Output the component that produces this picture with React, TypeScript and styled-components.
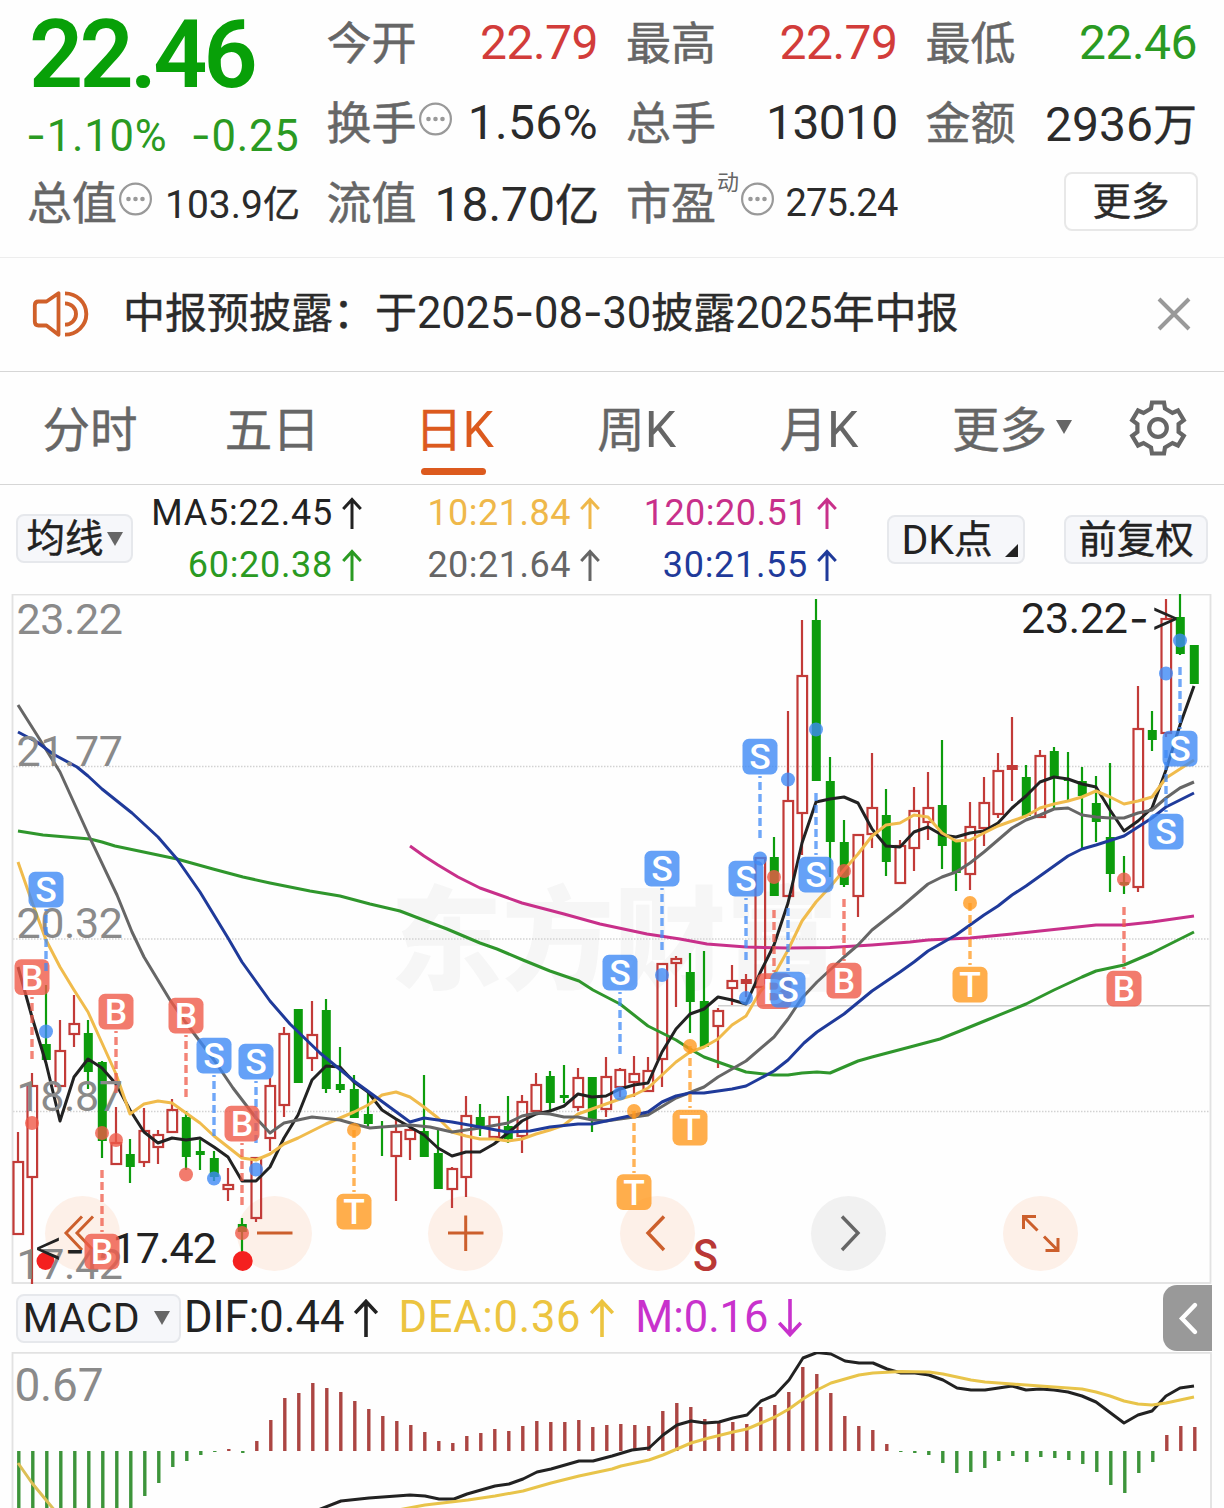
import React from "react";
import styled, { createGlobalStyle } from "styled-components";

const SANS = `Roboto, "Noto Sans CJK SC", sans-serif`;
const CJK = `"Noto Sans CJK SC", sans-serif`;

const C = {
  up: "#d23c3a",
  down: "#2a9a22",
  label: "#666666",
  text: "#2b2b2b",
  accent: "#dc5a1e",
  frame: "#e2e2e2",
};

const GlobalStyle = createGlobalStyle`
  * { box-sizing: border-box; }
  body { margin: 0; background: #fff; }
`;

const Page = styled.main`
  width: 1224px;
  height: 1508px;
  overflow: hidden;
  display: flex;
  flex-direction: column;
  background: #fefefe;
  font-family: ${SANS};
  color: ${C.text};
`;

/* ---------- quote header ---------- */

const Quote = styled.section`
  height: 258px;
  padding: 3px 27px 0;
  display: grid;
  grid-template-columns: repeat(4, 1fr);
  grid-template-rows: repeat(3, 80px);
  column-gap: 28px;
  border-bottom: 1px solid #ededed;
`;

const PriceBlock = styled.div`
  grid-row: span 2;
  display: flex;
  flex-direction: column;
`;

const Price = styled.div`
  height: 104px;
  line-height: 104px;
  padding-left: 2px;
  font-size: 95px;
  font-weight: 600;
  letter-spacing: -3.8px;
  color: #08a008;
`;

const Changes = styled.div`
  display: flex;
  justify-content: space-between;
  margin: 0 -1px 0 -1px;
  line-height: 56px;
  font-size: 43.5px;
  letter-spacing: 0.8px;
  color: ${C.down};
`;

const Cell = styled.div`
  display: flex;
  align-items: center;
  justify-content: space-between;
  white-space: nowrap;
`;

const Label = styled.span`
  display: flex;
  align-items: center;
  padding-bottom: 4px;
  font: 45px/76px ${CJK};
  color: ${C.label};
  -webkit-text-stroke: 0.5px currentColor;
`;

const Value = styled.span<{ $tone?: string; $size?: number; $track?: number; $shift?: number }>`
  margin-right: ${(p) => -(p.$shift ?? 0)}px;
  font-size: ${(p) => p.$size ?? 48}px;
  line-height: 80px;
  letter-spacing: ${(p) => p.$track ?? 0}px;
  color: ${(p) => p.$tone ?? C.text};
`;

const Unit = styled.span<{ $size: number }>`
  font-family: ${CJK};
  font-size: ${(p) => p.$size}px;
  -webkit-text-stroke: 0.4px currentColor;
`;

const Sup = styled.sup`
  align-self: flex-start;
  margin-left: 1px;
  font-size: 22px;
  line-height: 34px;
  -webkit-text-stroke: 0;
`;

const Dash = styled.span`
  font-family: Inter, sans-serif;
`;

const MoreButton = styled.button`
  justify-self: end;
  align-self: center;
  width: 134px;
  height: 59px;
  margin: -3px -1px 0 0;
  padding: 0 0 6px;
  border: 2px solid #e8e8e8;
  border-radius: 8px;
  background: #fff;
  font: 38.5px/49px ${CJK};
  -webkit-text-stroke: 0.4px currentColor;
  color: ${C.text};
`;

/* ---------- notice ---------- */

const Notice = styled.section`
  height: 114px;
  padding: 0 33px 1px 32px;
  display: flex;
  align-items: center;
  border-bottom: 1px solid #d6d6d6;
`;

const NoticeText = styled.p`
  flex: 1;
  margin: 0 0 4px 33px;
  font: 42px/60px ${CJK};
  -webkit-text-stroke: 0.4px currentColor;
  white-space: nowrap;
`;

const Num = styled.span`
  font-family: Roboto, sans-serif;
  font-size: 43.5px;
  letter-spacing: -0.15px;
  -webkit-text-stroke: 0;
`;

/* ---------- period tabs ---------- */

const Tabs = styled.nav`
  height: 113px;
  display: flex;
  border-bottom: 1px solid #d6d6d6;
`;

const Tab = styled.div<{ $active?: boolean }>`
  width: 182.2px;
  display: flex;
  flex-direction: column;
  align-items: center;
  padding-top: 20px;
  font: 47.5px/70px ${CJK};
  -webkit-text-stroke: 0.4px currentColor;
  color: ${(p) => (p.$active ? C.accent : C.label)};
  white-space: nowrap;
  &:first-child { margin-left: -1px; }
  &::after {
    content: "";
    width: 65px;
    height: 7px;
    margin: 3px 1px 0 0;
    border-radius: 4px;
    background: ${(p) => (p.$active ? C.accent : "transparent")};
  }
`;

const TabLabel = styled.span<{ $wide?: boolean }>`
  display: flex;
  align-items: center;
  gap: 9px;
  margin-left: ${(p) => (p.$wide ? 22 : 0)}px;
`;

const K = styled.span`
  font: 50px/70px Roboto, sans-serif;
  -webkit-text-stroke: 0;
`;

const Inline = styled.span`
  white-space: nowrap;
`;

const Settings = styled.div`
  flex: 1;
  display: flex;
  align-items: center;
  justify-content: center;
`;

const Caret = styled.i<{ $w: number; $h: number; $ml?: number }>`
  margin-left: ${(p) => p.$ml ?? 0}px;
  border: ${(p) => p.$w / 2}px solid transparent;
  border-bottom: 0;
  border-top: ${(p) => p.$h}px solid ${C.label};
`;

/* ---------- moving averages ---------- */

const Averages = styled.section`
  height: 109px;
  padding: 0 16px;
  display: flex;
  align-items: flex-start;
`;

const Chip = styled.button<{ $w: number; $ml?: number; $mt?: number }>`
  width: ${(p) => p.$w}px;
  height: 49px;
  margin: ${(p) => p.$mt ?? 0}px 0 0 ${(p) => p.$ml ?? 0}px;
  padding: 0;
  display: flex;
  align-items: center;
  justify-content: center;
  border: 2px solid #e6e8ec;
  border-radius: 8px;
  background: #f6f7fa;
  font: 38.5px/45px ${CJK};
  color: #222;
  white-space: nowrap;
`;

const Han = styled.span`
  margin-top: -6px;
  -webkit-text-stroke: 0.4px currentColor;
`;

const Latin = styled.span<{ $size: number; $track?: number; $ml?: number }>`
  margin-left: ${(p) => p.$ml ?? 0}px;
  font: ${(p) => p.$size}px/46px Roboto, sans-serif;
  letter-spacing: ${(p) => p.$track ?? 0}px;
`;

const Corner = styled.i`
  align-self: flex-end;
  margin: 0 -2px 5px 12px;
  border-left: 13px solid transparent;
  border-bottom: 13px solid #222;
`;

const AverageGrid = styled.div`
  width: 704px;
  display: grid;
  grid-template-columns: 229px 238px 237px;
  grid-auto-rows: 52px;
  padding-top: 2px;
`;

const Reading = styled.div<{ $tone: string; $size?: number; $track?: number }>`
  display: flex;
  align-items: center;
  justify-content: flex-end;
  gap: 9px;
  font-size: ${(p) => p.$size ?? 36}px;
  letter-spacing: ${(p) => p.$track ?? 0.5}px;
  line-height: 52px;
  white-space: nowrap;
  color: ${(p) => p.$tone};
`;

const ArrowSvg = styled.svg`
  display: block;
  flex: none;
`;

/* ---------- charts ---------- */

const ChartArea = styled.section`
  position: relative;
  height: 690px;
`;

const Plot = styled.svg`
  position: absolute;
  left: 0;
  top: 0;
  display: block;
`;

const Controls = styled.div`
  position: absolute;
  left: 45px;
  right: 146px;
  bottom: 13px;
  display: flex;
  justify-content: space-between;
`;

const Round = styled.button<{ $muted?: boolean }>`
  width: 75px;
  height: 75px;
  padding: 0;
  border: 0;
  border-radius: 50%;
  background: ${(p) => (p.$muted ? "#f1f1f1" : "#fdf0e8")};
  color: ${(p) => (p.$muted ? "#666" : "#cc5f2c")};
  svg { display: block; }
`;

const MacdBar = styled.section`
  height: 68px;
  padding: 0 12px 0 16px;
  display: flex;
  align-items: center;
`;

const MacdReadings = styled.div`
  flex: 1;
  display: flex;
  gap: 21px;
  margin-left: 3px;
`;

const Drawer = styled.button`
  width: 49px;
  height: 66px;
  padding: 0;
  border: 0;
  border-radius: 14px 0 0 14px;
  background: #999;
`;

const MacdPlot = styled.svg`
  display: block;
`;

/* ---------- data ---------- */

const xAt = (i: number) => 18.3 + i * 14;

type Candle = [kind: "r" | "g" | "f", high: number, top: number, bottom: number, low: number];

const candles: Candle[] = [
  ["r", 1132, 1162, 1234, 1234], ["r", 1073, 1086, 1177, 1284], ["g", 985, 1044, 1060, 1060],
  ["r", 1020, 1051, 1086, 1086], ["r", 995, 1024, 1034, 1047], ["g", 1020, 1033, 1072, 1089],
  ["g", 1061, 1062, 1141, 1158], ["r", 1107, 1143, 1164, 1164], ["g", 1139, 1154, 1167, 1183],
  ["r", 1108, 1131, 1162, 1167], ["r", 1130, 1135, 1147, 1164], ["r", 1099, 1110, 1132, 1132],
  ["g", 1111, 1117, 1157, 1170], ["g", 1140, 1151, 1155, 1170], ["g", 1151, 1158, 1177, 1181],
  ["r", 1168, 1185, 1189, 1201], ["g", 1218, 1224, 1232, 1252], ["r", 1157, 1158, 1218, 1222],
  ["r", 1078, 1086, 1138, 1151], ["r", 1027, 1034, 1105, 1117], ["g", 1009, 1009, 1083, 1083],
  ["r", 1001, 1035, 1058, 1071], ["g", 999, 1010, 1089, 1093], ["g", 1047, 1084, 1090, 1093],
  ["g", 1075, 1089, 1118, 1118], ["g", 1093, 1114, 1124, 1126], ["g", 1121, 1126, 1127, 1156],
  ["r", 1118, 1132, 1156, 1201], ["r", 1127, 1130, 1139, 1160], ["g", 1075, 1131, 1157, 1157],
  ["g", 1130, 1153, 1189, 1189], ["r", 1167, 1169, 1189, 1208], ["r", 1096, 1116, 1177, 1197],
  ["g", 1104, 1117, 1127, 1136], ["r", 1117, 1117, 1137, 1140], ["g", 1096, 1126, 1139, 1143],
  ["r", 1095, 1102, 1136, 1153], ["r", 1073, 1085, 1111, 1111], ["g", 1071, 1076, 1103, 1110],
  ["g", 1065, 1095, 1098, 1103], ["r", 1068, 1078, 1107, 1111], ["g", 1077, 1077, 1120, 1132],
  ["r", 1057, 1077, 1109, 1117], ["r", 1068, 1070, 1087, 1097], ["r", 1056, 1074, 1082, 1097],
  ["r", 1057, 1071, 1091, 1091], ["r", 964, 964, 1059, 1087], ["r", 956, 959, 963, 1007],
  ["g", 953, 972, 1002, 1033], ["g", 951, 1001, 1047, 1047], ["r", 1008, 1011, 1026, 1068],
  ["r", 965, 981, 988, 1005], ["f", 974, 979, 984, 997], ["r", 858, 858, 987, 987],
  ["g", 837, 857, 896, 896], ["r", 711, 801, 896, 896], ["r", 620, 676, 813, 855],
  ["g", 599, 620, 781, 781], ["g", 757, 781, 842, 877], ["g", 820, 842, 885, 887],
  ["r", 835, 835, 896, 917], ["r", 753, 808, 834, 848], ["g", 789, 815, 862, 876],
  ["r", 840, 846, 883, 883], ["r", 787, 811, 848, 871], ["r", 772, 808, 822, 840],
  ["g", 740, 805, 846, 869], ["g", 840, 840, 873, 891], ["r", 802, 827, 874, 890],
  ["r", 777, 803, 828, 846], ["r", 753, 771, 814, 818], ["f", 717, 765, 770, 801],
  ["g", 765, 777, 816, 816], ["r", 750, 756, 817, 817], ["g", 747, 751, 777, 808],
  ["g", 752, 779, 780, 801], ["g", 767, 781, 796, 848], ["g", 776, 803, 822, 842],
  ["g", 763, 837, 874, 892], ["g", 856, 882, 885, 894], ["r", 686, 729, 887, 892],
  ["g", 711, 730, 740, 751], ["r", 599, 619, 733, 737], ["g", 594, 617, 654, 655],
  ["g", 645, 645, 684, 684],
];

const ma5 = [
  967, 1017, 1063, 1121, 1077, 1059, 1068, 1084, 1110, 1132, 1143, 1138, 1140, 1138, 1147, 1157,
  1181, 1181, 1167, 1138, 1115, 1080, 1066, 1067, 1082, 1092, 1110, 1119, 1127, 1135, 1148, 1156,
  1152, 1152, 1144, 1133, 1121, 1114, 1111, 1106, 1094, 1097, 1096, 1089, 1085, 1083, 1052, 1029,
  1014, 1009, 997, 1000, 1004, 973, 945, 903, 843, 802, 799, 797, 803, 829, 846, 847, 832, 827,
  835, 837, 833, 831, 823, 808, 796, 782, 777, 779, 784, 787, 810, 831, 821, 808, 770, 725, 686,
];

const ma10 = [
  862, 902, 940, 967, 990, 1012, 1043, 1074, 1114, 1104, 1101, 1103, 1113, 1123, 1136, 1147, 1158,
  1160, 1154, 1144, 1138, 1131, 1124, 1118, 1112, 1105, 1095, 1092, 1097, 1107, 1118, 1132, 1136,
  1139, 1139, 1141, 1139, 1134, 1130, 1125, 1114, 1109, 1104, 1099, 1095, 1088, 1075, 1062, 1052,
  1047, 1039, 1025, 1016, 992, 975, 950, 921, 902, 887, 870, 854, 836, 825, 823, 815, 817, 833,
  841, 840, 833, 826, 821, 816, 808, 804, 801, 797, 791, 797, 804, 801, 797, 778, 769, 760,
];

const toLine = (ys: number[]) => ys.map((y, i) => `${18 + i * 14},${y}`).join(" ");

const lines = [
  {
    color: "#2f962c",
    points:
      "18,831 43,835 90,839 102,842 115,846 177,859 213,869 243,877 270,883 310,891 340,896 370,904 400,911 447,929 480,943 497,949 523,960 550,971 579,981 593,990 620,1004 648,1026 676,1040 690,1049 704,1057 718,1062 746,1072 774,1075 788,1075 802,1073 817,1072 830,1073 858,1061 872,1057 910,1047 940,1039 960,1031 987,1020 1026,1004 1054,990 1082,977 1096,971 1124,965 1152,953 1166,946 1194,932",
  },
  {
    color: "#c8308a",
    points:
      "410,846 424,856 438,865 458,877 480,888 522,903 564,914 600,924 647,934 680,939 707,944 746,947 788,948 830,947.5 872,945 910,942 928,940 970,938 1012,934 1026,932.5 1068,928 1096,925 1124,925 1152,922 1194,916",
  },
  { color: "#222222", points: toLine(ma5) },
  { color: "#f0bb4c", points: toLine(ma10) },
  {
    color: "#666666",
    points:
      "18,705 37,735 60,772 90,838 117,895 132,932 144,957 170,1000 186,1023 214,1060 233,1088 256,1118 270,1133 284,1123 298,1120 312,1117 340,1120 354,1124 370,1128 382,1127 410,1125 430,1127 452,1132 480,1128 508,1123 522,1116 536,1113 550,1114 564,1117 578,1117 592,1120 606,1121 620,1119 648,1115 676,1098 704,1087 718,1077 746,1061 774,1037 788,1019 802,998 817,982 844,957 858,945 872,930 900,908 928,884 942,877 956,872 970,863 984,852 1012,828 1026,820 1040,815 1054,809 1068,808 1082,815 1096,817 1110,818 1124,818 1138,813 1152,810 1166,798 1180,788 1194,782",
  },
  {
    color: "#1f3a9a",
    points:
      "18,732 37,742 53,754 77,767 88,776 102,789 132,813 158,837 177,859 200,892 228,938 242,962 270,1001 290,1024 320,1053 354,1081 380,1100 410,1122 424,1118 438,1120 452,1122 480,1127 507,1132 530,1131 550,1127 578,1124 592,1124 620,1118 648,1112 662,1102 676,1096 690,1093 704,1093 732,1089 746,1086 774,1071 788,1060 804,1043 817,1032 844,1014 872,991 900,972 914,962 928,951 956,935 984,915 998,906 1012,895 1026,886 1040,876 1068,856 1082,849 1096,845 1124,836 1138,827 1152,818 1166,807 1194,793",
  },
];

const tone: Record<string, string> = { S: "#3f8af5", B: "#ef5a48", T: "#ff9a1f" };

type Trade = { k: "S" | "B" | "T"; x: number; y: number; dash: [number, number]; dot: number };

const trades: Trade[] = [
  { k: "B", x: 32, y: 977, dash: [997, 1059], dot: 1123 },
  { k: "S", x: 46, y: 889.5, dash: [909, 971], dot: 1031.5 },
  { k: "B", x: 116, y: 1011.5, dash: [1031, 1093], dot: 1140 },
  { k: "B", x: 186, y: 1015.5, dash: [1035, 1097], dot: 1174.5 },
  { k: "S", x: 214, y: 1055.5, dash: [1075, 1136], dot: 1178.5 },
  { k: "S", x: 256, y: 1061.5, dash: [1081, 1143], dot: 1169.5 },
  { k: "B", x: 242, y: 1123.5, dash: [1143, 1205], dot: 1233 },
  { k: "B", x: 102, y: 1251.5, dash: [1170, 1232], dot: 1133 },
  { k: "T", x: 354, y: 1211.5, dash: [1130, 1192], dot: 1130 },
  { k: "S", x: 620, y: 972.5, dash: [992, 1055], dot: 1093.5 },
  { k: "T", x: 634, y: 1192, dash: [1111, 1173], dot: 1111 },
  { k: "S", x: 662, y: 868.5, dash: [888, 950], dot: 975 },
  { k: "T", x: 690, y: 1127.5, dash: [1046, 1108], dot: 1046 },
  { k: "S", x: 746, y: 878.5, dash: [898, 960], dot: 998 },
  { k: "S", x: 760, y: 756.5, dash: [776, 838], dot: 858.5 },
  { k: "B", x: 774, y: 991, dash: [910, 972], dot: 877 },
  { k: "S", x: 788, y: 989.5, dash: [908, 971], dot: 779.5 },
  { k: "S", x: 816, y: 874.5, dash: [793, 855], dot: 729.5 },
  { k: "B", x: 844, y: 980.5, dash: [899, 961], dot: 871 },
  { k: "T", x: 970, y: 984.5, dash: [903, 965], dot: 903 },
  { k: "B", x: 1124, y: 988.5, dash: [907, 969], dot: 879.5 },
  { k: "S", x: 1180, y: 748.5, dash: [667, 729], dot: 640.5 },
  { k: "S", x: 1166, y: 831.5, dash: [750, 812], dot: 673.5 },
];

const macd = [
  1515, 1515, 1515, 1515, 1515, 1515, 1515, 1515, 1515, 1496, 1483, 1467, 1461, 1455, 1452, 1449,
  1453, 1441, 1420, 1398, 1393, 1383, 1388, 1392, 1401, 1409, 1416, 1421, 1425, 1432, 1441, 1443,
  1436, 1433, 1429, 1431, 1426, 1421, 1422, 1422, 1420, 1427, 1425, 1424, 1425, 1426, 1411, 1403,
  1407, 1419, 1422, 1422, 1424, 1407, 1405, 1392, 1367, 1374, 1393, 1416, 1426, 1430, 1444, 1452,
  1453, 1455, 1463, 1473, 1472, 1468, 1461, 1456, 1462, 1457, 1458, 1460, 1464, 1472, 1485, 1493,
  1473, 1462, 1435, 1426, 1427,
];

const dif =
  "318,1510 341,1501 369,1498 410,1495 425,1496 439,1499 454,1499 467,1494 495,1486 509,1484 523,1479 537,1472 551,1469 579,1461 593,1461 612,1456 632,1450 649,1448 663,1435 677,1425 691,1421 705,1423 719,1422 733,1418 747,1415 761,1401 775,1395 789,1380 803,1358 817,1352.5 831,1354 845,1361 859,1363 873,1363 887,1369 901,1373 915,1373 929,1375 943,1380 957,1388 971,1390 985,1390 1012,1386 1026,1390 1040,1389 1054,1390 1068,1392 1082,1396 1096,1402 1124,1423 1138,1415 1152,1411 1166,1396 1180,1388 1194,1386";
const deaHead = "18,1463 32,1483 46,1500 56,1512";
const dea =
  "398,1510 425,1505 468,1500 495,1496 523,1491 551,1483 579,1476 612,1469 621,1466 649,1460 663,1455 677,1449 691,1443 705,1439 733,1432 747,1429 761,1423 775,1417 789,1409 803,1399 817,1390 831,1383 859,1375 873,1373 901,1371.5 929,1372 943,1374 971,1380 985,1382 1012,1384 1082,1389 1096,1392 1110,1396 1124,1401 1138,1404 1152,1405 1166,1403 1194,1397";

/* ---------- icons ---------- */

const InfoSvg = styled.svg`
  margin: 0 0 4px 2px;
`;

const InfoIcon = () => (
  <InfoSvg width="33" height="34" viewBox="0 0 33 34">
    <circle cx="16.5" cy="17" r="15.4" fill="none" stroke="#999" strokeWidth="2.2" />
    {[9.5, 16.5, 23.5].map((x) => (
      <circle key={x} cx={x} cy="17" r="2.3" fill="#999" />
    ))}
  </InfoSvg>
);

const SpeakerIcon = () => (
  <svg width="58" height="48" viewBox="0 0 58 48" fill="none" stroke="#d0602a" strokeWidth="3.8" strokeLinejoin="round">
    <path d="M26.5 3.2V44.8L14.5 35.5H6.5Q2.8 35.5 2.8 31.5V15.5Q2.8 11.5 6.5 11.5H14.5Z" />
    <path d="M33 13.3A10.7 10.7 0 0 1 33 34.7M33 3.3A20.7 20.7 0 0 1 33 44.7" transform="translate(-1 0) scale(1.03 1)" />
  </svg>
);

const CloseIcon = () => (
  <svg width="34" height="34" viewBox="0 0 34 34" stroke="#999" strokeWidth="4">
    <path d="M2 2L32 32M32 2L2 32" />
  </svg>
);

const GearIcon = () => (
  <svg width="60" height="60" viewBox="-30 -30 60 60" fill="none" stroke="#666" strokeWidth="4.2">
    <path d="M-6 -25.5H6L7 -19.5L14.5 -15L20 -17.5L25.8 -7.8L20.6 -4V4L25.8 7.8L20 17.5L14.5 15L7 19.5L6 25.5H-6L-7 19.5L-14.5 15L-20 17.5L-25.8 7.8L-20.6 4V-4L-25.8 -7.8L-20 -17.5L-14.5 -15L-7 -19.5Z" />
    <circle r="8.8" />
  </svg>
);

const Arrow = ({ h = 32, w = 20, down = false }: { h?: number; w?: number; down?: boolean }) => (
  <ArrowSvg width={w} height={h} viewBox={`0 0 ${w} ${h}`} fill="none" stroke="currentColor" strokeWidth={w > 20 ? 3.6 : 3}>
    <g transform={down ? `rotate(180 ${w / 2} ${h / 2})` : undefined}>
      <path d={`M${w / 2} ${h}V2M1.2 ${w / 2 + 2}L${w / 2} 2.4L${w - 1.2} ${w / 2 + 2}`} />
    </g>
  </ArrowSvg>
);

const ControlIcon = ({ d, w = 3 }: { d: string; w?: number }) => (
  <svg width="75" height="75" viewBox="0 0 75 75" fill="none" stroke="currentColor" strokeWidth={w}>
    <path d={d} />
  </svg>
);

/* ---------- chart parts ---------- */

const CandleMark = ({ c, i }: { c: Candle; i: number }) => {
  const [kind, high, top, bottom, low] = c;
  const x = xAt(i);
  const color = kind === "g" ? "#0c9c0c" : "#c23b38";
  const height = Math.max(bottom - top, 2);
  return (
    <g stroke={color} strokeWidth="2.2" fill="none">
      {high < top && <path d={`M${x - 0.3} ${high}V${top}`} />}
      {low > bottom && <path d={`M${x - 0.3} ${bottom}V${low}`} />}
      {kind === "g" && <rect x={x - 4.5} y={top} width="9" height={height} fill={color} stroke="none" />}
      {kind === "f" && <rect x={x - 5.5} y={top} width="11" height={height} fill={color} stroke="none" />}
      {kind === "r" && <rect x={x - 4.8} y={top} width="9.6" height={height} />}
    </g>
  );
};

const TradeMark = ({ t }: { t: Trade }) => (
  <g>
    <path
      d={`M${t.x} ${t.dash[0]}V${t.dash[1]}`}
      stroke={tone[t.k]}
      strokeOpacity="0.75"
      strokeWidth="3.4"
      strokeDasharray="8 4"
      strokeDashoffset={t.dash[0] > t.y ? 6 : 0}
    />
    <circle cx={t.x} cy={t.dot} r="7" fill={tone[t.k]} fillOpacity="0.8" />
    <rect x={t.x - 17.5} y={t.y - 17.7} width="35" height="35.6" rx="6.5" fill={tone[t.k]} fillOpacity="0.8" />
    <text x={t.x} y={t.y + 12.5} textAnchor="middle" fontFamily="Roboto" fontSize="35.5" fontWeight="500" fill="#fff">
      {t.k}
    </text>
  </g>
);

const axis: [string, number][] = [
  ["23.22", 634], ["21.77", 766], ["20.32", 938], ["18.87", 1111], ["17.42", 1279],
];

const PriceChart = () => (
  <Plot width="1224" height="690" viewBox="0 594 1224 690" fontFamily="Roboto, sans-serif">
    <text x="390" y="981" fontFamily={CJK} fontSize="112" fontWeight="900" fill="#f6f6f6">
      东方财富
    </text>
    <g stroke="#d2d2d2" strokeWidth="1.4" strokeDasharray="1.5 1.5">
      {[766.5, 939, 1111.5].map((y) => (
        <path key={y} d={`M13 ${y}H1211`} />
      ))}
    </g>
    <path d="M718 1005.8H1211" stroke="#cfcfcf" strokeWidth="1.6" />
    <rect x="12.5" y="594.5" width="1198" height="688.5" fill="none" stroke={C.frame} strokeWidth="1.8" />
    {candles.map((c, i) => (
      <CandleMark key={i} c={c} i={i} />
    ))}
    {lines.map((l) => (
      <polyline key={l.color} points={l.points} fill="none" stroke={l.color} strokeWidth="3" strokeLinejoin="round" />
    ))}
    <circle cx="45.5" cy="1261" r="9" fill="#f4201f" />
    <circle cx="242.7" cy="1261" r="10" fill="#f4201f" />
    <g fontSize="43" fill="#8a8a8a">
      {axis.map(([label, y]) => (
        <text key={label} x="16.5" y={y} textLength="106.5">
          {label}
        </text>
      ))}
    </g>
    <g fontSize="43" fill="#222">
      <text>
        <tspan x="35" y="1266" fontSize="54" fontWeight="300">&lt;</tspan>
        <tspan x="65" y="1265" fontFamily="Inter">-</tspan>
      </text>
      <text x="112.5" y="1263" textLength="104.5">17.42</text>
      <text x="1021" y="633" textLength="107">23.22</text>
      <text>
        <tspan x="1129" y="634" fontFamily="Inter">-</tspan>
        <tspan x="1151" y="636" fontSize="54" fontWeight="300">&gt;</tspan>
      </text>
    </g>
    {trades.map((t) => (
      <TradeMark key={`${t.k}${t.x}`} t={t} />
    ))}
    <text x="693" y="1271" fontSize="45" fontWeight="500" fill="#b93836" textLength="25" lengthAdjust="spacingAndGlyphs">
      S
    </text>
  </Plot>
);

const MacdChart = () => (
  <MacdPlot width="1224" height="156" viewBox="0 1352 1224 156" fontFamily="Roboto, sans-serif">
    <path d="M12.5 1508V1352.8H1211V1508" fill="none" stroke={C.frame} strokeWidth="1.8" />
    <text x="14.5" y="1400.5" fontSize="46" fill="#8a8a8a" textLength="89">
      0.67
    </text>
    {macd.map((y, i) => (
      <path key={i} d={`M${xAt(i) + 0.5} 1451V${y}`} stroke={y < 1451 ? "#ab4542" : "#3d943a"} strokeWidth="3.4" />
    ))}
    <g fill="none" strokeWidth="3" strokeLinejoin="round">
      <polyline points={dif} stroke="#222" />
      <polyline points={deaHead} stroke="#dcbf55" />
      <polyline points={dea} stroke="#e8c44a" />
    </g>
  </MacdPlot>
);

export default function App() {
  return (
    <Page>
      <GlobalStyle />
      <Quote>
        <PriceBlock>
          <Price>22.46</Price>
          <Changes>
            <span><Dash>-</Dash>1.10%</span>
            <span><Dash>-</Dash>0.25</span>
          </Changes>
        </PriceBlock>
        <Cell><Label>今开</Label><Value $tone={C.up} $track={-0.5}>22.79</Value></Cell>
        <Cell><Label>最高</Label><Value $tone={C.up} $track={-0.5}>22.79</Value></Cell>
        <Cell><Label>最低</Label><Value $tone={C.down} $track={-0.5}>22.46</Value></Cell>
        <Cell><Label>换手<InfoIcon /></Label><Value $track={0.3}>1.56%</Value></Cell>
        <Cell><Label>总手</Label><Value $track={-0.7}>13010</Value></Cell>
        <Cell><Label>金额</Label><Value>2936<Unit $size={44}>万</Unit></Value></Cell>
        <Cell><Label>总值<InfoIcon /></Label><Value $size={39} $shift={1.5}>103.9<Unit $size={37}>亿</Unit></Value></Cell>
        <Cell><Label>流值</Label><Value $shift={1}>18.70<Unit $size={44}>亿</Unit></Value></Cell>
        <Cell>
          <Label>市盈<Sup>动</Sup><InfoIcon /></Label>
          <Value $size={38} $track={-0.8}>275.24</Value>
        </Cell>
        <MoreButton>更多</MoreButton>
      </Quote>

      <Notice>
        <SpeakerIcon />
        <NoticeText>
          中报预披露：于<Num>2025<Dash>-</Dash>08<Dash>-</Dash>30</Num>披露<Num>2025</Num>年中报
        </NoticeText>
        <CloseIcon />
      </Notice>

      <Tabs>
        <Tab><TabLabel>分时</TabLabel></Tab>
        <Tab><TabLabel>五日</TabLabel></Tab>
        <Tab $active><Inline>日<K>K</K></Inline></Tab>
        <Tab><Inline>周<K>K</K></Inline></Tab>
        <Tab><Inline>月<K>K</K></Inline></Tab>
        <Tab><TabLabel $wide>更多<Caret $w={16} $h={14} /></TabLabel></Tab>
        <Settings><GearIcon /></Settings>
      </Tabs>

      <Averages>
        <Chip $w={117} $mt={29}><Han>均线</Han><Caret $w={16} $h={14} $ml={3} /></Chip>
        <AverageGrid>
          <Reading $tone="#222" $track={0.8}>MA5:22.45<Arrow /></Reading>
          <Reading $tone="#efb84a">10:21.84<Arrow /></Reading>
          <Reading $tone="#c8308a">120:20.51<Arrow /></Reading>
          <Reading $tone={C.down} $track={0.7}>60:20.38<Arrow /></Reading>
          <Reading $tone="#666">20:21.64<Arrow /></Reading>
          <Reading $tone="#1f3a9a" $track={0.7}>30:21.55<Arrow /></Reading>
        </AverageGrid>
        <Chip $w={138} $ml={50} $mt={30}><Latin $size={41} $ml={5}>DK</Latin><Han>点</Han><Corner /></Chip>
        <Chip $w={144} $ml={39} $mt={30}><Han>前复权</Han></Chip>
      </Averages>

      <ChartArea>
        <Controls>
          <Round><ControlIcon d="M37 20.5L21 37L37 54M48 20.5L32 37L48 54" /></Round>
          <Round><ControlIcon d="M20 37H55.5" /></Round>
          <Round><ControlIcon d="M20 37H55.5M37.7 19.5V55" /></Round>
          <Round><ControlIcon w={3.4} d="M44 20.5L28 37L44 54" /></Round>
          <Round $muted><ControlIcon w={3.4} d="M31 20.5L47 37L31 54" /></Round>
          <Round><ControlIcon d="M20.5 33V20.5H33M20.5 20.5L34.5 34.5M55 42V54.5H42.5M55 54.5L41 40.5" /></Round>
        </Controls>
        <PriceChart />
      </ChartArea>

      <MacdBar>
        <Chip $w={165}><Latin $size={40.5} $track={0.7} $ml={-4}>MACD</Latin><Caret $w={16} $h={14} $ml={14} /></Chip>
        <MacdReadings>
          <Reading $tone="#222" $size={43.5} $track={0.1}>DIF:0.44<Arrow h={38} w={24} /></Reading>
          <Reading $tone="#ecc440" $size={43.5} $track={0.7}>DEA:0.36<Arrow h={38} w={24} /></Reading>
          <Reading $tone="#c832cc" $size={43.5} $track={0}>M:0.16<Arrow h={38} w={24} down /></Reading>
        </MacdReadings>
        <Drawer>
          <svg width="49" height="66" viewBox="0 0 49 66" fill="none" stroke="#fff" strokeWidth="4.4" strokeLinecap="round">
            <path d="M32 20L19 33.5L32 47" />
          </svg>
        </Drawer>
      </MacdBar>
      <MacdChart />
    </Page>
  );
}
